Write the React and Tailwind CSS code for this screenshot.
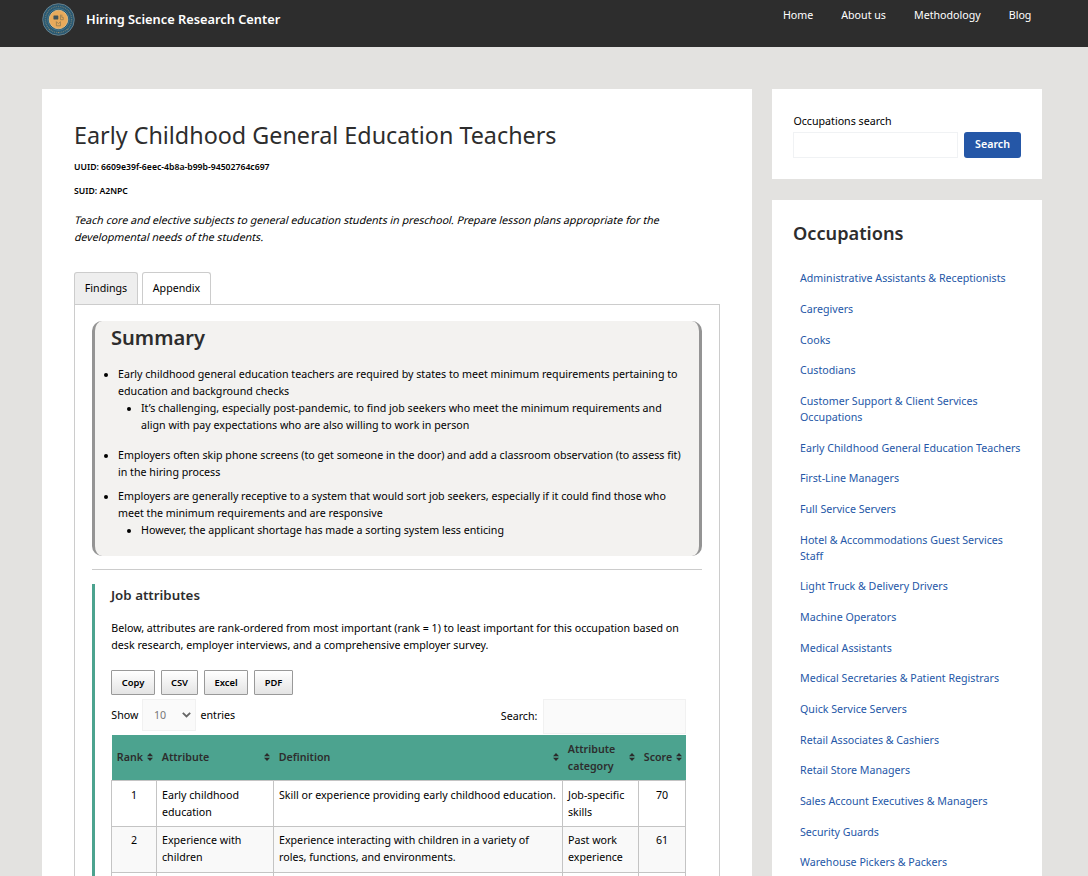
import React from "react";

const occupations = [
  ["Administrative Assistants & Receptionists"],
  ["Caregivers"],
  ["Cooks"],
  ["Custodians"],
  ["Customer Support & Client Services", "Occupations"],
  ["Early Childhood General Education Teachers"],
  ["First-Line Managers"],
  ["Full Service Servers"],
  ["Hotel & Accommodations Guest Services", "Staff"],
  ["Light Truck & Delivery Drivers"],
  ["Machine Operators"],
  ["Medical Assistants"],
  ["Medical Secretaries & Patient Registrars"],
  ["Quick Service Servers"],
  ["Retail Associates & Cashiers"],
  ["Retail Store Managers"],
  ["Sales Account Executives & Managers"],
  ["Security Guards"],
  ["Warehouse Pickers & Packers"],
];

const rows = [
  ["1", ["Early childhood", "education"], ["Skill or experience providing early childhood education."], ["Job-specific", "skills"], "70"],
  ["2", ["Experience with", "children"], ["Experience interacting with children in a variety of", "roles, functions, and environments."], ["Past work", "experience"], "61"],
];

function Lines({ items, className = "" }) {
  return items.map((t) => (
    <span key={t} className={"block whitespace-nowrap " + className}>{t}</span>
  ));
}

function Bullet({ className = "", children }) {
  return (
    <div className={"flex " + className}>
      <span className="mt-[7px] mr-[10px] h-1 w-1 shrink-0 rounded-full bg-black" />
      <div>{children}</div>
    </div>
  );
}

function SortIcon() {
  return (
    <svg className="h-[8px] w-[6px] shrink-0" viewBox="0 0 6 8" fill="#2b2b2b">
      <path d="M3 0 6 3.2H0ZM0 4.8h6L3 8Z" />
    </svg>
  );
}

function Logo() {
  return (
    <svg className="h-[33px] w-[33px]" viewBox="0 0 34 34" fill="none">
      <circle cx="17" cy="17" r="16.3" fill="#285873" stroke="#6f8792" strokeWidth="0.9" />
      <circle cx="17" cy="17" r="13.5" stroke="#6b7a72" strokeWidth="1.5" strokeDasharray="1 0.9" />
      <circle cx="17" cy="17" r="11.1" fill="#1d506b" stroke="#6593a3" strokeWidth="0.6" />
      <circle cx="17" cy="17" r="9.6" fill="#e8aa5b" stroke="#f2c98f" strokeWidth="0.8" />
      <rect x="11.8" y="13" width="5" height="4" rx="0.5" fill="#40535a" />
      <path d="M19 12v5.2h2.9v-2.4h-1.5V12M14.8 19.2v4.3h4.2v-4.2l-2.1 2-2.1-2.1" stroke="#8f7a50" strokeWidth="0.8" />
      <path d="M7 27.5h.8M16.7 30.5h.8M26.2 27.5h.8" stroke="#d0a465" strokeWidth="0.8" />
    </svg>
  );
}

const exportButton =
  "h-[25px] rounded-[1px] border border-[#999] bg-linear-to-b from-white to-[#e4e4e4] text-[9.4px] leading-[23px] font-semibold text-black";
const cell = "border border-[#c4c4c4] px-[5px] pb-[5px] align-top";

export default function App() {
  return (
    <div className="flex h-[876px] w-[1088px] flex-col overflow-hidden bg-[#e3e2e0] font-['Noto_Sans',sans-serif] text-[10.67px] leading-[17px] text-black">
      <header className="flex h-[47px] shrink-0 items-start bg-[#2d2d2d] pl-[42px] text-white">
        <div className="mt-[3px]"><Logo /></div>
        <div className="mt-[9px] ml-[11px] text-[12.8px] leading-5 font-semibold whitespace-nowrap">Hiring Science Research Center</div>
        <nav className="mt-[7px] mr-[56.6px] ml-auto flex gap-7">
          <a>Home</a><a>About us</a><a>Methodology</a><a>Blog</a>
        </nav>
      </header>
      <div className="flex min-h-0 flex-1 gap-5 pt-[42px] pl-[42px]">
        <main className="flex w-[710px] flex-col bg-white px-8 pt-[29px]">
          <h1 className="text-[23.33px] leading-[34px] whitespace-nowrap text-[#2d2d2d]">Early Childhood General Education Teachers</h1>
          <p className="mt-[7px] text-[8.67px] leading-[16px] font-semibold">UUID: 6609e39f-6eec-4b8a-b99b-94502764c697</p>
          <p className="mt-[8px] text-[8.67px] leading-[16px] font-semibold">SUID: A2NPC</p>
          <p className="mt-[13px]">
            <Lines className="origin-[0_12px] -skew-x-[14deg]" items={["Teach core and elective subjects to general education students in preschool. Prepare lesson plans appropriate for the", "developmental needs of the students."]} />
          </p>
          <div className="mt-[26px] flex gap-1">
            <div className="h-8 w-16 rounded-t-[3px] border border-b-0 border-[#ccc] bg-[#eee] text-center leading-[31px]">Findings</div>
            <div className="h-8 w-[69px] rounded-t-[3px] border border-b-0 border-[#ccc] bg-white text-center leading-[31px]">Appendix</div>
          </div>
          <section className="w-[646px] flex-1 border border-b-0 border-[#ccc] px-[17px] pt-4">
            <div className="h-[235px] rounded-[10px] border-x-[3px] border-[#949494] bg-[#f3f2f0] pt-[4px]">
              <h2 className="ml-4 text-[20.1px] leading-[26px] font-semibold text-[#2d2d2d]">Summary</h2>
              <div className="mt-[15px] ml-[9px]">
                <Bullet>
                  <Lines items={["Early childhood general education teachers are required by states to meet minimum requirements pertaining to", "education and background checks"]} />
                  <Bullet className="ml-[9px]">
                    <Lines items={["It’s challenging, especially post-pandemic, to find job seekers who meet the minimum requirements and", "align with pay expectations who are also willing to work in person"]} />
                  </Bullet>
                </Bullet>
                <Bullet className="mt-[13px]">
                  <Lines items={["Employers often skip phone screens (to get someone in the door) and add a classroom observation (to assess fit)", "in the hiring process"]} />
                </Bullet>
                <Bullet className="mt-[7px]">
                  <Lines items={["Employers are generally receptive to a system that would sort job seekers, especially if it could find those who", "meet the minimum requirements and are responsive"]} />
                  <Bullet className="ml-[9px]">
                    <Lines items={["However, the applicant shortage has made a sorting system less enticing"]} />
                  </Bullet>
                </Bullet>
              </div>
            </div>
            <hr className="mt-[13px] border-[#ccc]" />
            <div className="mt-[14px] h-[300px] border-l-[3px] border-[#4ca38f] pl-4">
              <h3 className="pt-[1px] text-[13.33px] leading-5 font-semibold text-[#2d2d2d]">Job attributes</h3>
              <p className="mt-[15px] ml-[0.3px]">
                <Lines items={["Below, attributes are rank-ordered from most important (rank = 1) to least important for this occupation based on", "desk research, employer interviews, and a comprehensive employer survey."]} />
              </p>
              <div className="mt-4 flex">
                <button className={exportButton + " w-11"}>Copy</button>
                <button className={exportButton + " ml-[6px] w-[37px]"}>CSV</button>
                <button className={exportButton + " ml-[6px] w-11"}>Excel</button>
                <button className={exportButton + " ml-[6px] w-[39px]"}>PDF</button>
              </div>
              <div className="mt-[4px] flex h-9 w-[575px] items-start">
                <span className="mt-[8px] w-[31px] pl-[0.3px]">Show</span>
                <div className="flex h-8 w-[54px] items-center justify-between border border-[#f1f1f1] bg-[#fafafa] pr-[4px] pl-[11px] text-[#777]">
                  10
                  <svg className="h-[6px] w-[9px]" viewBox="0 0 9 6" fill="none" stroke="#666" strokeWidth="1.8"><path d="m.8.8 3.7 3.7L8.2.8" /></svg>
                </div>
                <span className="mt-[8px] ml-[4.5px]">entries</span>
                <span className="mt-[9px] mr-[5.6px] ml-auto">Search:</span>
                <div className="h-[35px] w-[143px] border border-[#f1f1f1] bg-[#fafafa]" />
              </div>
              <table className="w-[575px] table-fixed border-collapse">
                <colgroup>
                  <col className="w-[45px]" /><col className="w-[117px]" /><col className="w-[289px]" /><col className="w-[76px]" /><col className="w-[47px]" />
                </colgroup>
                <thead>
                  <tr className="h-[45px] bg-[#4ca38f] text-left text-[#2d2d2d]">
                    {[["Rank"], ["Attribute"], ["Definition"], ["Attribute", "category"], ["Score"]].map((h, i) => (
                      <th key={i} className="py-0 pr-[4px] pl-[5.3px] align-middle font-semibold">
                        <div className="flex h-[35px] items-center justify-between">
                          <div className={h.length > 1 ? "pt-[1px]" : ""}><Lines items={h} /></div>
                          <SortIcon />
                        </div>
                      </th>
                    ))}
                  </tr>
                </thead>
                <tbody>
                  {rows.map((r, i) => {
                    const c = cell + (i === 0 ? " pt-[6px]" : " pt-[5px]");
                    return (
                      <tr key={r[0]} className={i % 2 ? "h-[46px] bg-[#f9f9f9]" : "h-[46px] bg-white"}>
                        <td className={c + " text-center"}>{r[0]}</td>
                        <td className={c}><Lines items={r[1]} /></td>
                        <td className={c}><Lines items={r[2]} /></td>
                        <td className={c}><Lines items={r[3]} /></td>
                        <td className={c + " text-center"}>{r[4]}</td>
                      </tr>
                    );
                  })}
                  <tr className="h-[46px]">
                    <td className={cell} /><td className={cell} /><td className={cell} /><td className={cell} /><td className={cell} />
                  </tr>
                </tbody>
              </table>
            </div>
          </section>
        </main>
        <aside className="flex w-[270px] flex-col gap-[21px]">
          <div className="h-[90px] shrink-0 bg-white px-[21px] pt-[24px]">
            <label className="ml-[0.4px] block">Occupations search</label>
            <div className="mt-[2px] flex gap-[6px]">
              <div className="h-[26px] w-[165px] border border-[#f0f2f4] bg-white" />
              <button className="h-[26px] w-[57px] rounded-[3px] bg-[#2557a7] pb-[2px] font-semibold text-white">Search</button>
            </div>
          </div>
          <div className="flex-1 bg-white pt-[19px] pl-[21px]">
            <h2 className="text-[18.2px] leading-7 font-semibold text-[#2d2d2d]">Occupations</h2>
            <ul className="mt-[23.35px] ml-[7px] text-[#2557a7]">
              {occupations.map((o) => (
                <li key={o[0]} className="mb-[14.66px] leading-4"><Lines items={o} /></li>
              ))}
            </ul>
          </div>
        </aside>
      </div>
    </div>
  );
}
